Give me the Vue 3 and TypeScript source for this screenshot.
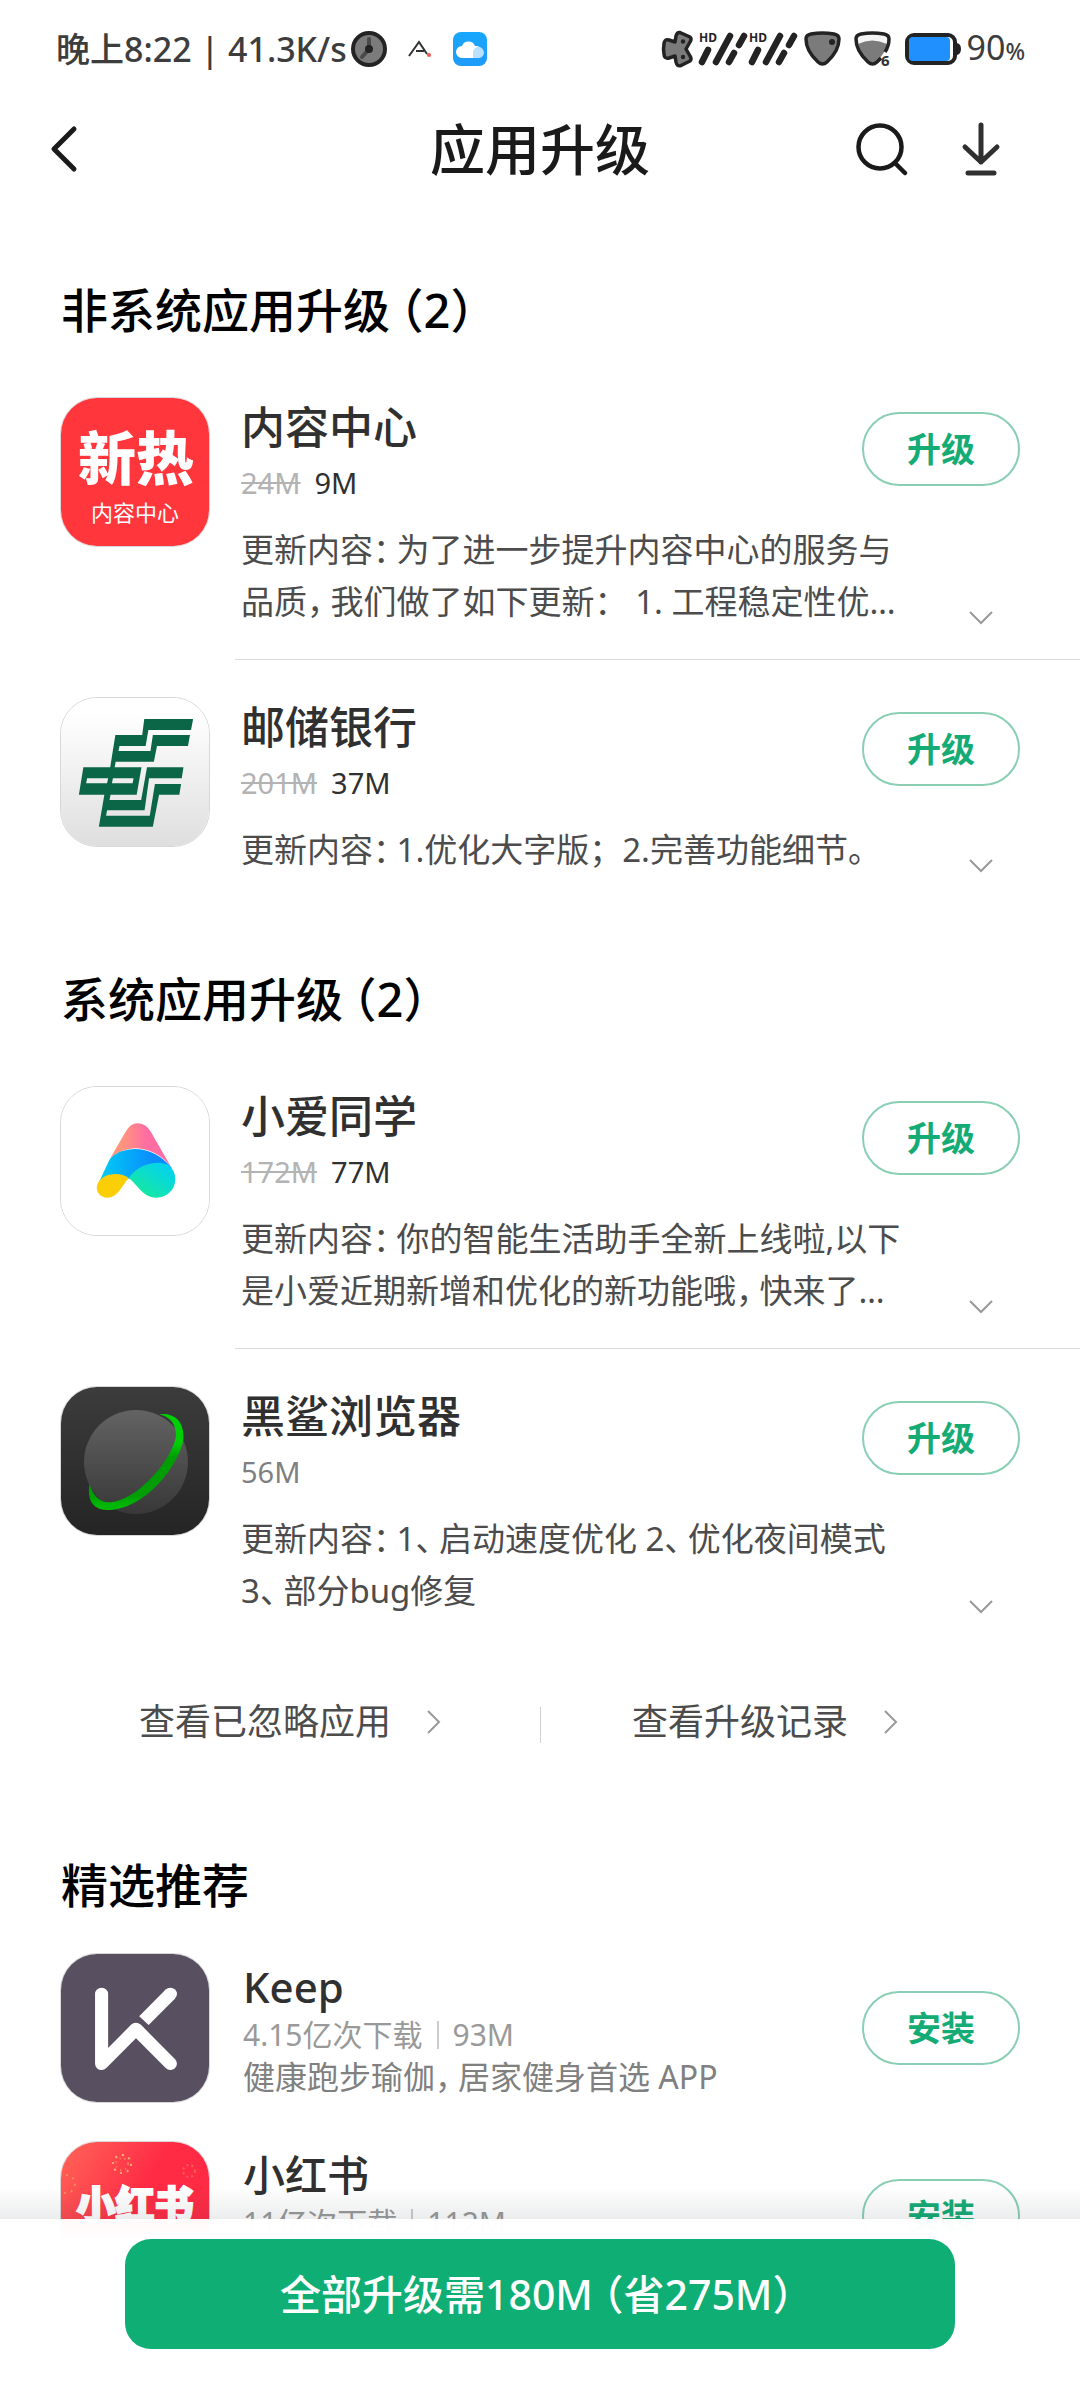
<script setup lang="ts">
interface UpdateItem {
  id: string
  name: string
  oldSize?: string
  size: string
  lines: string[]
}

interface UpdateGroup {
  title: string
  items: UpdateItem[]
}

interface Recommendation {
  id: string
  name: string
  downloads: string
  size: string
  summary?: string
}

interface Piece {
  text: string
  kind: 'text' | 'mark' | 'open'
}

const groups: UpdateGroup[] = [
  {
    title: '非系统应用升级（2）',
    items: [
      {
        id: 'news',
        name: '内容中心',
        oldSize: '24M',
        size: '9M',
        lines: ['更新内容：为了进一步提升内容中心的服务与', '品质，我们做了如下更新：\u00a0 1. 工程稳定性优…'],
      },
      {
        id: 'psbc',
        name: '邮储银行',
        oldSize: '201M',
        size: '37M',
        lines: ['更新内容：1.优化大字版；2.完善功能细节。'],
      },
    ],
  },
  {
    title: '系统应用升级（2）',
    items: [
      {
        id: 'xiaoai',
        name: '小爱同学',
        oldSize: '172M',
        size: '77M',
        lines: ['更新内容：你的智能生活助手全新上线啦,以下', '是小爱近期新增和优化的新功能哦，快来了…'],
      },
      {
        id: 'shark',
        name: '黑鲨浏览器',
        size: '56M',
        lines: ['更新内容：1、启动速度优化 2、优化夜间模式', '3、部分bug修复'],
      },
    ],
  },
]

const recommendations: Recommendation[] = [
  { id: 'keep', name: 'Keep', downloads: '4.15亿次下载', size: '93M', summary: '健康跑步瑜伽，居家健身首选 APP' },
  { id: 'xhs', name: '小红书', downloads: '11亿次下载', size: '112M' },
]

// Full-width punctuation is set in its narrower form, so it is split from the text around it.
function pieces(text: string): Piece[] {
  return text
    .split(/([：，、（）])/)
    .filter((part) => part !== '')
    .map((part) => ({
      text: part,
      kind: part === '（' ? 'open' : /^[：，、）]$/.test(part) ? 'mark' : 'text',
    }))
}
</script>

<template>
  <div class="screen">
    <div class="status">
      <div class="status-side">
        <span class="clock-text">晚上8:22 | 41.3K/s</span>
        <svg class="ic-clock" width="36" height="36" viewBox="0 0 36 36">
          <circle cx="18" cy="18" r="16" fill="#7b7b7b" stroke="#232323" stroke-width="4" />
          <path d="M18 8V18L11 26" fill="none" stroke="#4a4a4a" stroke-width="4" stroke-linecap="round" />
          <circle cx="18" cy="18" r="4" fill="#232323" />
        </svg>
        <svg class="ic-a" width="24" height="18" viewBox="0 0 24 18">
          <path d="M1 16L11 2L19 14M8 11H16" fill="none" stroke="#333" stroke-width="2" />
          <circle cx="21" cy="15" r="2" fill="#f0564f" />
        </svg>
        <svg class="ic-cloud" width="34" height="34" viewBox="0 0 34 34">
          <defs>
            <linearGradient id="cloudBg" x1="0" y1="0" x2="0" y2="1">
              <stop offset="0" stop-color="#17a7fb" />
              <stop offset="1" stop-color="#1e9bf9" />
            </linearGradient>
          </defs>
          <rect width="34" height="34" rx="8" fill="url(#cloudBg)" />
          <path d="M9 26a5.500 5.500 0 0 1 0-12a7 7 0 0 1 13 0a6 6 0 0 1 2 12z" fill="#fff" />
          <path d="M20 26v-6a5.500 5.500 0 1 1 5 6z" fill="#b9e0fd" />
        </svg>
      </div>
      <div class="status-side">
        <svg width="32" height="38" viewBox="-1 -1 32 38">
          <path
            d="M18 1.500Q15 1 14 5L13 11L7 9Q2 8 2 13Q1 18 2 23Q2 28 7 27L13 25L14 31Q15 36 19 34.500L28 30Q30 28 28 25L24 18L28 11Q30 8 28 6Z"
            fill="#7b7b7b" stroke="#232323" stroke-width="3.500" stroke-linejoin="round"
          />
          <circle cx="21" cy="10.500" r="2.200" fill="#232323" />
          <circle cx="21" cy="26" r="2.200" fill="#232323" />
        </svg>
        <svg v-for="n in 2" :key="n" class="ic-signal" width="50" height="36" viewBox="0 0 50 36">
          <text x="1" y="11" font-size="12" font-weight="700" fill="#232323">HD</text>
          <path
            d="M4 31L10 19M18 31L32 5M31 31L36 22M41 14L46 5"
            fill="none" stroke="#232323" stroke-width="6.500" stroke-linecap="round"
          />
        </svg>
        <svg class="ic-shield" width="37" height="36" viewBox="0 0 37 36">
          <path
            d="M2 8Q2 4 7 3Q18 1 30 3Q35 4 35 8Q35 20 23 31Q18.500 35 14 31Q2 20 2 8Z"
            fill="#7b7b7b" stroke="#232323" stroke-width="3.500"
          />
          <circle cx="28" cy="11" r="3" fill="#232323" />
        </svg>
        <svg class="ic-wifi" width="38" height="38" viewBox="0 0 38 38">
          <path d="M2 9Q2 5 7 4Q18 2 30 4Q35 5 35 9Q35 21 23 32Q18.500 36 14 32Q2 21 2 9Z" fill="#f4f4f4" />
          <path d="M4 14Q18 7 33 14Q32 22 23 31Q18.500 34 14 31Q6 24 4 14Z" fill="#7b7b7b" />
          <path
            d="M27 28Q25 30 23 32Q18.500 36 14 32Q2 21 2 9Q2 5 7 4Q18 2 30 4Q35 5 35 9Q35 16 31 22"
            fill="none" stroke="#232323" stroke-width="3.500"
          />
          <text x="27" y="36" font-size="15" font-weight="700" fill="#333">6</text>
        </svg>
        <svg class="ic-battery" width="56" height="34" viewBox="0 0 56 34">
          <rect x="2" y="3" width="48" height="28" rx="7" fill="#fff" stroke="#232323" stroke-width="4" />
          <rect x="4" y="5" width="41" height="24" rx="4" fill="#2190ff" />
          <path d="M52 11q4 1 4 6t-4 6z" fill="#232323" />
        </svg>
        <span class="battery-text">90<small>%</small></span>
      </div>
    </div>

    <header class="header">
      <button class="icon-button back" type="button" aria-label="返回">
        <svg width="30" height="50" viewBox="0 0 30 50">
          <path d="M24 5L4 25L24 45" fill="none" stroke="#1a1a1a" stroke-width="5" stroke-linecap="round" stroke-linejoin="round" />
        </svg>
      </button>
      <h1>应用升级</h1>
      <div class="header-actions">
        <button class="icon-button" type="button" aria-label="搜索">
          <svg width="54" height="54" viewBox="0 0 54 54">
            <circle cx="25" cy="25" r="21.500" fill="none" stroke="#1a1a1a" stroke-width="4.500" />
            <path d="M40 41L50 51" stroke="#1a1a1a" stroke-width="4.500" stroke-linecap="round" />
          </svg>
        </button>
        <button class="icon-button" type="button" aria-label="下载">
          <svg width="40" height="54" viewBox="0 0 40 54">
            <path
              d="M20 3V40M4 25L20 40L36 25M7 51H33"
              fill="none" stroke="#303030" stroke-width="5" stroke-linecap="round" stroke-linejoin="round"
            />
          </svg>
        </button>
      </div>
    </header>

    <main class="content">
      <section v-for="group in groups" :key="group.title" class="group">
        <h2>
          <span v-for="(p, i) in pieces(group.title)" :key="i" :class="p.kind">{{ p.text }}</span>
        </h2>
        <template v-for="(item, index) in group.items" :key="item.id">
          <hr v-if="index > 0" />
          <article class="item">
            <div class="app-icon">
              <svg v-if="item.id === 'news'" width="150" height="150" viewBox="0 0 150 150">
                <rect width="150" height="150" fill="#ff373c" />
                <text x="75" y="82" text-anchor="middle" font-size="58" font-weight="900" fill="#fff">新热</text>
                <text x="74" y="123" text-anchor="middle" font-size="22" fill="#fff">内容中心</text>
              </svg>
              <svg v-else-if="item.id === 'psbc'" width="150" height="150" viewBox="174 81 436 450" preserveAspectRatio="none">
                <defs>
                  <linearGradient id="psbcBg" x1="0" y1="0" x2="0" y2="1">
                    <stop offset="0.1" stop-color="#fff" />
                    <stop offset="1" stop-color="#dedede" />
                  </linearGradient>
                </defs>
                <rect x="174" y="81" width="436" height="450" fill="url(#psbcBg)" />
                <path
                  fill="#0b6647" fill-rule="evenodd"
                  d="M416 144H558L552 177H428L420 225H344L341 240H434L441 192H549L543 225H453L444 272H333L330 289H408L394 371H318L315 387H407L424 289H530L525 322H430L417 418H308L305 434H432L447 339H523L518 371H459L441 467H284L300 371H226L239 289H317L332 192H410ZM250 322L247 337H308L311 322ZM325 322L322 337H382L385 322Z"
                />
              </svg>
              <svg v-else-if="item.id === 'xiaoai'" width="150" height="150" viewBox="174 78 436 450" preserveAspectRatio="none">
                <defs>
                  <linearGradient id="aiPink"><stop offset="0.2" stop-color="#ff967c" /><stop offset="0.6" stop-color="#ff6da2" /></linearGradient>
                  <linearGradient id="aiBlue"><stop offset="0" stop-color="#00d0f2" /><stop offset="0.75" stop-color="#0a8cff" /></linearGradient>
                  <linearGradient id="aiGreen" x1="0.2" y1="1" x2="0.9" y2="0.2"><stop offset="0.2" stop-color="#14e6a8" /><stop offset="1" stop-color="#04d3ec" /></linearGradient>
                </defs>
                <rect x="174" y="78" width="436" height="450" fill="#fff" />
                <path d="M316 294L360 215Q375 187 396 187Q420 187 435 212L494 318Q450 262 388 262Q345 264 316 294Z" fill="url(#aiPink)" />
                <path d="M279 375L316 294Q342 264 388 264Q450 264 497 322L480 330L371 353L330 345Z" fill="url(#aiBlue)" />
                <path d="M279 372C290 335 345 330 371 351C350 375 340 410 308 410C288 410 274 392 279 372Z" fill="#fcce06" />
                <path d="M371 351C400 308 452 298 482 310Q506 325 506 355C506 388 480 410 452 410C412 410 400 375 371 351Z" fill="url(#aiGreen)" />
              </svg>
              <svg v-else width="150" height="150" viewBox="174 141 436 450" preserveAspectRatio="none">
                <defs>
                  <linearGradient id="sharkBg" x1="0" y1="0" x2="0" y2="1"><stop offset="0" stop-color="#3c3c3c" /><stop offset="1" stop-color="#242424" /></linearGradient>
                  <linearGradient id="sharkBall" x1="0" y1="0" x2="0" y2="1"><stop offset="0" stop-color="#636363" /><stop offset="1" stop-color="#383838" /></linearGradient>
                  <linearGradient id="sharkRing" x1="0" y1="0" x2="0" y2="1"><stop offset="0.3" stop-color="#00cf05" /><stop offset="0.45" stop-color="#009d05" /><stop offset="0.85" stop-color="#009d05" /><stop offset="0.95" stop-color="#00b805" /></linearGradient>
                </defs>
                <rect x="174" y="141" width="436" height="450" fill="url(#sharkBg)" />
                <ellipse cx="392" cy="366" rx="151" ry="156" fill="url(#sharkBall)" />
                <path
                  d="M460 223C500 218 530 240 530 290C530 350 430 512 305 510C266 508 249 478 257 432C265 462 285 488 312 487C400 485 506 345 508 285C508 250 490 232 460 223Z"
                  fill="url(#sharkRing)"
                />
              </svg>
            </div>
            <div class="item-body">
              <div class="item-head">
                <div class="item-titles">
                  <h3>{{ item.name }}</h3>
                  <p class="sizes">
                    <del v-if="item.oldSize">{{ item.oldSize }}</del>
                    <span :class="item.oldSize ? 'new-size' : 'only-size'">{{ item.size }}</span>
                  </p>
                </div>
                <button class="pill" type="button">升级</button>
              </div>
              <div class="item-notes">
                <p class="notes">
                  <span v-for="line in item.lines" :key="line" class="line">
                    <span v-for="(p, i) in pieces(line)" :key="i" :class="p.kind">{{ p.text }}</span>
                  </span>
                </p>
                <button class="expand" type="button" aria-label="展开">
                  <svg width="24" height="14" viewBox="0 0 24 14">
                    <path d="M1 1L12 12L23 1" fill="none" stroke="#999" stroke-width="2" />
                  </svg>
                </button>
              </div>
            </div>
          </article>
        </template>
      </section>

      <nav class="links">
        <a href="#ignored">
          查看已忽略应用
          <svg width="14" height="24" viewBox="0 0 14 24"><path d="M1 1L12 12L1 23" fill="none" stroke="#999" stroke-width="2" /></svg>
        </a>
        <a href="#history">
          查看升级记录
          <svg width="14" height="24" viewBox="0 0 14 24"><path d="M1 1L12 12L1 23" fill="none" stroke="#999" stroke-width="2" /></svg>
        </a>
      </nav>

      <section class="picks">
        <h2>精选推荐</h2>
        <article v-for="app in recommendations" :key="app.id" class="pick">
          <div class="app-icon">
            <svg v-if="app.id === 'keep'" width="150" height="150" viewBox="174 402 436 450" preserveAspectRatio="none">
              <rect x="174" y="402" width="436" height="450" fill="#585060" />
              <path d="M292 522V731L392 627L492 731" fill="none" stroke="#fff" stroke-width="38" stroke-linecap="round" stroke-linejoin="round" />
              <path d="M492 522L415 602" stroke="#fff" stroke-width="38" />
              <circle cx="492" cy="522" r="19" fill="#fff" />
            </svg>
            <svg v-else width="150" height="150" viewBox="0 0 150 150">
              <defs>
                <linearGradient id="xhsBg" x1="0" y1="0.1" x2="0.5" y2="0.4"><stop offset="0" stop-color="#ff6157" /><stop offset="1" stop-color="#ff2b45" /></linearGradient>
              </defs>
              <rect width="150" height="150" fill="url(#xhsBg)" />
              <g fill="none" stroke-width="2">
                <circle cx="61" cy="22" r="9" stroke="#ffb07a" stroke-dasharray="2 5" />
                <circle cx="61" cy="22" r="6" stroke="#ff8a5c" stroke-dasharray="1 4" />
                <circle cx="128" cy="29" r="6" stroke="#f8604f" stroke-dasharray="2 3" />
                <circle cx="5" cy="42" r="9" stroke="#ff8a5c" stroke-dasharray="2 5" />
              </g>
              <text x="74" y="77" text-anchor="middle" font-size="39" font-weight="900" fill="#fff" stroke="#fff" stroke-width="2">小红书</text>
            </svg>
          </div>
          <div class="pick-body">
            <h3>{{ app.name }}</h3>
            <p class="meta"><span>{{ app.downloads }}</span><i class="bar" /><span>{{ app.size }}</span></p>
            <p v-if="app.summary" class="summary">
              <span v-for="(p, i) in pieces(app.summary)" :key="i" :class="p.kind">{{ p.text }}</span>
            </p>
          </div>
          <button class="pill" type="button">安装</button>
        </article>
      </section>
    </main>

    <footer class="footer">
      <button class="upgrade-all" type="button">
        <span v-for="(p, i) in pieces('全部升级需180M（省275M）')" :key="i" :class="p.kind">{{ p.text }}</span>
      </button>
    </footer>
  </div>
</template>

<style>
body {
  margin: 0;
  background: #fff;
}
</style>

<style scoped>
.screen {
  position: relative;
  display: flex;
  flex-direction: column;
  height: 100vh;
  overflow: hidden;
  background: #fff;
  color: #303030;
  font-family: "Noto Sans", "Noto Sans CJK SC", sans-serif;
}

h1, h2, h3, p {
  margin: 0;
  font-weight: 500;
}

button {
  padding: 0;
  border: 0;
  background: none;
  font-family: inherit;
}

svg {
  display: block;
  flex: none;
  overflow: visible;
}

.status {
  flex: none;
  display: flex;
  justify-content: space-between;
  align-items: center;
  height: 98px;
  padding: 0 55px 0 56px;
}

.status-side {
  display: flex;
  align-items: center;
}

.clock-text {
  font-size: 34px;
  font-weight: 500;
  line-height: 44px;
  color: #3d3d3d;
  white-space: nowrap;
}

.ic-clock { margin-left: 4px; }
.ic-a { margin-left: 21px; }
.ic-cloud { margin-left: 21px; }
.ic-signal { margin-left: 5px; }
.ic-signal + .ic-signal { margin-left: 0; }
.ic-shield { margin-left: 6px; }
.ic-wifi { margin-left: 13px; }
.ic-battery { margin-left: 13px; }

.battery-text {
  margin-left: 5px;
  font-size: 34px;
  line-height: 44px;
  color: #3d3d3d;
}

.battery-text small {
  font-size: 23px;
  font-weight: 500;
}

.header {
  flex: none;
  display: grid;
  grid-template-columns: 1fr auto 1fr;
  align-items: center;
  height: 102px;
  padding: 0 79px 0 50px;
}

.header h1 {
  margin-left: 29px;
  font-size: 55px;
  line-height: 72px;
  color: #1a1a1a;
}

.back {
  justify-self: start;
}

.header-actions {
  display: flex;
  justify-content: flex-end;
  gap: 52px;
}

.content {
  flex: 1;
  min-height: 0;
  overflow-y: auto;
  scrollbar-width: none;
}

h2 {
  margin-left: 61px;
  font-size: 47px;
  line-height: 60px;
  color: #000;
}

.group h2 {
  margin-bottom: 57px;
}

.group {
  padding-top: 80px;
}

.group + .group {
  padding-top: 93px;
}

.mark {
  margin-right: 7px;
  font-feature-settings: "halt";
}

.open {
  margin-left: 10px;
  font-feature-settings: "halt";
}

.item,
.pick {
  display: flex;
  gap: 31px;
  padding: 0 60px;
}

hr {
  height: 1px;
  margin: 31px 0 37px 235px;
  border: 0;
  background: #d9d9d9;
}

.app-icon {
  box-sizing: border-box;
  flex: none;
  width: 150px;
  height: 150px;
  border: 1px solid #d8d8d8;
  border-radius: 37px;
  overflow: hidden;
}

.item-body {
  flex: 1;
  min-width: 0;
}

.item-head,
.item-notes {
  display: flex;
  justify-content: space-between;
}

.item-titles {
  padding-bottom: 21px;
}

h3 {
  font-size: 44px;
  line-height: 60px;
  color: #303030;
}

.sizes {
  display: flex;
  gap: 14px;
  margin-top: 6px;
  font-size: 29px;
  font-weight: 400;
  line-height: 40px;
}

del {
  color: #b3b3b3;
}

.only-size {
  color: #808080;
}

.pill {
  flex: none;
  box-sizing: border-box;
  width: 158px;
  height: 74px;
  border: 2px solid #8acfb4;
  border-radius: 37px;
  font-size: 34px;
  font-weight: 600;
  line-height: 44px;
  color: #14ab75;
}

.item-head .pill {
  margin-top: 15px;
}

.notes {
  font-size: 33px;
  font-weight: 400;
  line-height: 52px;
  color: #4c4c4c;
  white-space: nowrap;
}

.line {
  display: block;
}

.expand {
  align-self: flex-end;
  display: flex;
  align-items: center;
  justify-content: center;
  width: 44px;
  height: 20px;
  margin-right: 17px;
}

.links {
  display: flex;
  align-items: center;
  margin-top: 75px;
}

.links a {
  box-sizing: border-box;
  width: 50%;
  display: flex;
  align-items: center;
  justify-content: center;
  gap: 36px;
  padding-left: 40px;
  font-size: 36px;
  line-height: 60px;
  color: #4c4c4c;
  text-decoration: none;
}

.links a + a {
  position: relative;
  padding: 0 90px 0 0;
}

.links a + a::before {
  content: "";
  position: absolute;
  left: 0;
  top: 15px;
  width: 1px;
  height: 36px;
  background: #d0d0d0;
}

.picks {
  padding-top: 103px;
}

.pick {
  margin-top: 38px;
}

.pick-body {
  flex: 1;
  min-width: 0;
  padding: 6px 0 0 2px;
}

.pick h3 {
  font-size: 42px;
  line-height: 55px;
}

.pick .pill {
  margin-top: 38px;
}

.meta {
  display: flex;
  align-items: center;
  font-size: 30px;
  font-weight: 400;
  line-height: 42px;
  color: #999;
}

.bar {
  width: 2px;
  height: 28px;
  margin: 0 14px;
  background: #ccc;
}

.summary {
  font-size: 32px;
  font-weight: 400;
  line-height: 42px;
  color: #808080;
}

.footer {
  position: absolute;
  right: 0;
  bottom: 0;
  left: 0;
  padding: 20px 125px 51px;
  background: linear-gradient(to bottom, rgba(255, 255, 255, 0.97), #fff 20px);
}

.footer::before {
  content: "";
  position: absolute;
  right: 0;
  bottom: 100%;
  left: 0;
  height: 32px;
  background: linear-gradient(to top, rgba(40, 50, 60, 0.09), rgba(40, 50, 60, 0));
}

.upgrade-all {
  width: 100%;
  height: 110px;
  padding-bottom: 4px;
  border-radius: 26px;
  background: #0eae74;
  font-size: 41px;
  font-weight: 500;
  color: #fff;
}
</style>
